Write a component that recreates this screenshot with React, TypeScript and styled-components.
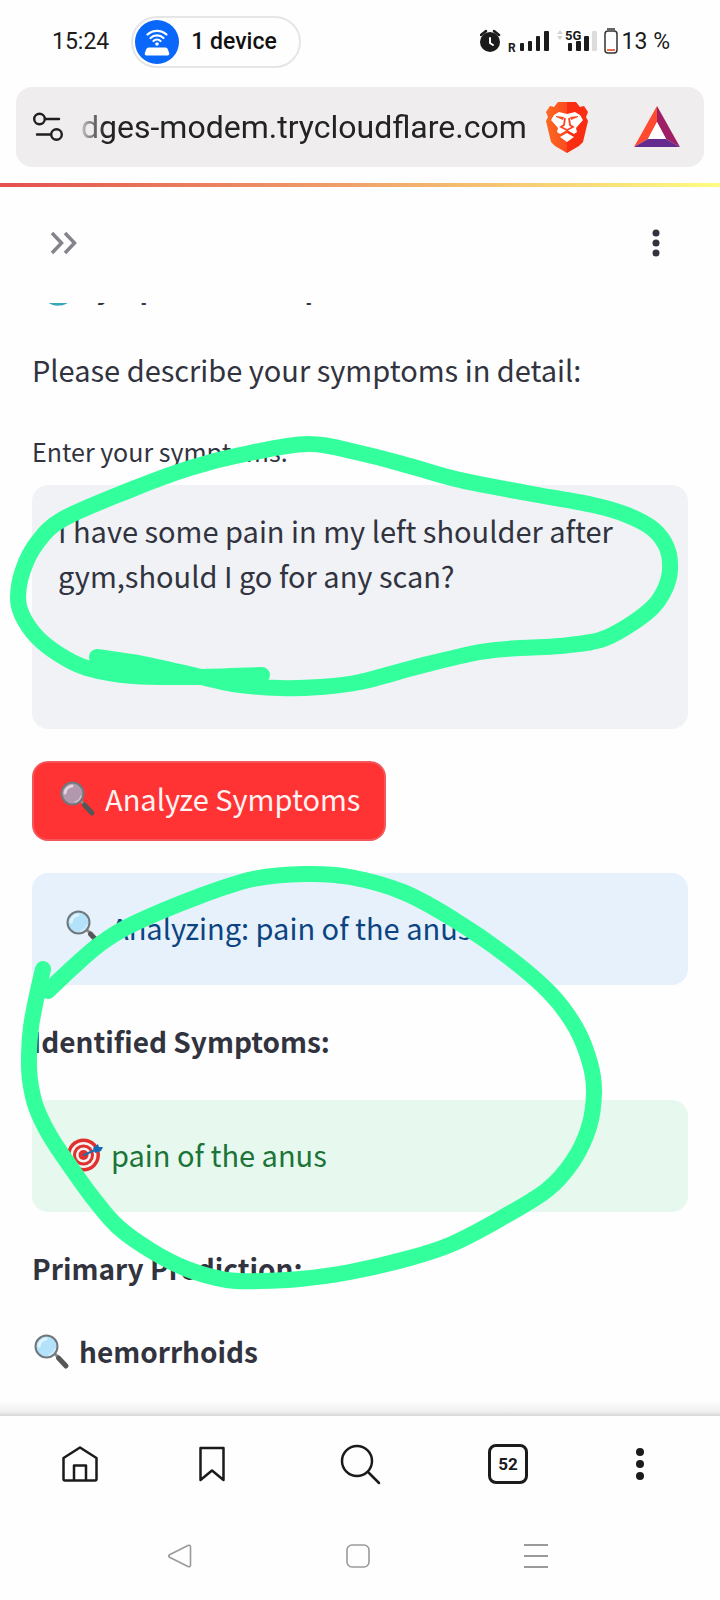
import React from "react";
import styled, { createGlobalStyle } from "styled-components";

const GlobalStyle = createGlobalStyle`
  * { box-sizing: border-box; }
  body { margin: 0; background: #fefefe; }
  button { font: inherit; border: 0; background: none; padding: 0; margin: 0; color: inherit; }
  p, h1, h2 { margin: 0; }
  svg { display: block; flex: none; }
`;

const uiFont = `Roboto, "Liberation Sans", sans-serif`;
const appFont = `"Noto Sans CJK SC", "Noto Sans", sans-serif`;

const Page = styled.div`
  position: relative;
  display: flex;
  flex-direction: column;
  min-height: 100vh;
  color: #31333f;
  font-family: ${appFont};
`;

const StatusBar = styled.header`
  display: flex;
  align-items: center;
  height: 84px;
  padding: 0 50px 0 52px;
  font: 400 23px/28px ${uiFont};
  color: #1b1b1b;
`;

const DevicePill = styled.button`
  && {
    display: flex;
    align-items: center;
    gap: 12px;
    height: 52px;
    margin-left: 22px;
    padding: 0 22px 0 2px;
    border: 2px solid #e6e6e6;
    border-radius: 26px;
    font-weight: 500;
    color: #111;
  }
`;

const StatusIcons = styled.div`
  display: flex;
  align-items: center;
  margin-left: auto;
  gap: 4px;
`;

const AddressBar = styled.div`
  display: flex;
  align-items: center;
  height: 80px;
  margin: 3px 16px 16px;
  padding: 0 24px 0 16px;
  border-radius: 16px;
  background: #efedee;
`;

const SiteButton = styled.button`
  display: flex;
`;

const Url = styled.input`
  flex: 1;
  min-width: 0;
  height: 48px;
  margin: 0 16px 0 17px;
  padding: 0;
  border: 0;
  background: none;
  color: #232323;
  font: 400 32px/48px ${uiFont};
  mask-image: linear-gradient(90deg, rgba(0, 0, 0, 0.2), #000 24px);
`;

const Shield = styled(SiteButton)`
  && { margin-right: 45px; }
`;

const Progress = styled.div`
  height: 4px;
  background: linear-gradient(90deg, #e4504f, #f0a36b 50%, #fdfd80);
`;

const Toolbar = styled.div`
  position: relative;
  z-index: 1;
  display: flex;
  align-items: center;
  justify-content: space-between;
  height: 116px;
  padding: 0 44px 4px;
  background: #fefefe;
`;

const ToolButton = styled.button`
  display: flex;
  align-items: center;
  justify-content: center;
  width: 40px;
  height: 48px;
`;

/* The scrolled column slides up under the toolbar. */
const Content = styled.main`
  flex: 1;
  display: flex;
  flex-direction: column;
  gap: 32px;
  margin-top: -40px;
  padding: 0 32px 32px;
  font-size: 29px;
  line-height: 45px;
`;

const Text = styled.p<{ $strong?: boolean }>`
  display: flex;
  gap: 7px;
  padding: ${(p) => (p.$strong ? "2px 0 4px" : "1px 0 5px")};
  font-size: ${(p) => (p.$strong ? 28 : 29)}px;
  font-weight: ${(p) => (p.$strong ? 600 : 400)};
`;

const Field = styled.div`
  display: flex;
  flex-direction: column;
`;

const Label = styled.label`
  height: 56px;
  padding-top: 1px;
  font-size: 25px;
  line-height: 42px;
`;

const SymptomBox = styled.textarea`
  display: block;
  width: 100%;
  height: 244px;
  padding: 23px 26px;
  border: 0;
  border-radius: 16px;
  resize: none;
  background: #f0f2f6;
  color: inherit;
  font: inherit;
`;

const AnalyzeButton = styled.button`
  && {
    display: flex;
    gap: 7px;
    align-self: flex-start;
    height: 80px;
    padding: 13px 24px 16px;
    border: 2px solid #f4565a;
    border-radius: 16px;
    background: #ff3334;
    color: #fff3f3;
  }
`;

const Alert = styled.div<{ $tone: "info" | "success" }>`
  display: flex;
  gap: 7px;
  padding: 32px 32px 35px;
  border-radius: 16px;
  background: ${(p) => (p.$tone === "info" ? "#e7f1fc" : "#e7f9ee")};
  color: ${(p) => (p.$tone === "info" ? "#0b4480" : "#1b7438")};
`;

const EmojiSvg = styled.svg`
  width: 40px;
  height: 40px;
  margin-top: 3px;
`;

const BrowserNav = styled.nav`
  position: relative;
  display: flex;
  align-items: center;
  justify-content: space-between;
  height: 96px;
  padding: 0 60px;
  background: #fefefe;
  &::before {
    content: "";
    position: absolute;
    left: 0;
    right: 0;
    bottom: 100%;
    height: 16px;
    background: linear-gradient(#fefefe, #f1f1f1 70%, #d6d6d6);
  }
`;

const NavButton = styled.button<{ $wide?: boolean }>`
  display: flex;
  align-items: center;
  justify-content: center;
  width: ${(p) => (p.$wide ? 72 : 40)}px;
  height: 48px;
`;

const TabCount = styled.span`
  display: flex;
  align-items: center;
  justify-content: center;
  width: 40px;
  height: 40px;
  border: 3px solid #1b1b1d;
  border-radius: 8px;
  color: #1b1b1d;
  font: 700 17px/20px ${uiFont};
`;

const SystemNav = styled.nav`
  display: flex;
  align-items: center;
  justify-content: space-between;
  height: 88px;
  padding: 0 172px 0 168px;
  background: #fefefe;
`;

const Ink = styled.svg`
  position: absolute;
  top: 0;
  left: 0;
  z-index: 2;
  width: 100%;
  height: auto;
  pointer-events: none;
`;

type Point = [number, number];

/* Catmull-Rom spline through the points, as cubic Béziers. */
function smooth(points: Point[]): string {
  let d = `M${points[0][0]} ${points[0][1]}`;
  for (let i = 0; i < points.length - 1; i++) {
    const a = points[i - 1] ?? points[i];
    const b = points[i];
    const c = points[i + 1];
    const e = points[i + 2] ?? c;
    d += `C${b[0] + (c[0] - a[0]) / 6} ${b[1] + (c[1] - a[1]) / 6} ${c[0] - (e[0] - b[0]) / 6} ${
      c[1] - (e[1] - b[1]) / 6
    } ${c[0]} ${c[1]}`;
  }
  return d;
}

const upperLoop: Point[] = [
  [262, 675], [193, 677], [133, 676], [87, 668], [60, 655], [37, 637], [22, 615], [18, 597],
  [23, 570], [37, 543], [63, 519], [130, 490], [190, 468], [240, 455], [308, 444], [360, 453],
  [410, 466], [460, 480], [527, 493], [593, 505], [627, 515], [653, 529], [667, 548], [670, 570],
  [665, 589], [653, 607], [628, 626], [600, 640], [560, 646], [520, 648], [480, 652], [420, 666],
  [360, 682], [320, 687], [280, 688], [233, 684], [197, 676], [143, 664], [97, 657],
];

const lowerLoop: Point[] = [
  [43, 969], [37, 995], [31, 1027], [29, 1055], [30, 1080], [36, 1107], [50, 1136], [72, 1169],
  [93, 1198], [117, 1226], [150, 1250], [187, 1269], [227, 1280], [260, 1281], [300, 1279],
  [350, 1272], [410, 1258], [452, 1244], [500, 1219], [547, 1190], [573, 1161], [589, 1127],
  [594, 1092], [590, 1063], [576, 1028], [550, 993], [507, 956], [453, 919], [403, 892],
  [350, 877], [305, 874], [253, 879], [200, 896], [133, 924], [100, 944], [70, 970], [48, 991],
];

const Magnifier = ({ glass = "#b5e2fb" }: { glass?: string }) => (
  <EmojiSvg viewBox="0 0 40 40" aria-hidden="true">
    <path d="M23 22l4 4" stroke="#8b8b8b" strokeWidth="3" />
    <path d="M26.500 26l7.500 8" stroke="#565656" strokeWidth="5" strokeLinecap="round" />
    <circle cx="14.500" cy="14.500" r="11" fill={glass} stroke="#71787c" strokeWidth="2" />
    <path d="M7 14a8 8 0 0 1 7-7" fill="none" stroke="#fff" strokeOpacity="0.600" strokeWidth="3" strokeLinecap="round" />
    <path d="M23 17a8 8 0 0 1-6 6" fill="none" stroke="#fff" strokeOpacity="0.400" strokeWidth="1.500" strokeLinecap="round" />
  </EmojiSvg>
);

const Target = () => (
  <EmojiSvg viewBox="0 0 40 40" aria-hidden="true">
    <circle cx="19.500" cy="20" r="16.500" fill="#e0312e" />
    <circle cx="19.500" cy="20" r="13" fill="#f7f3f3" />
    <circle cx="19.500" cy="20" r="10.500" fill="#e0312e" />
    <circle cx="19.500" cy="20" r="7.500" fill="#f7f3f3" />
    <circle cx="19.500" cy="20" r="5" fill="#e0312e" />
    <path d="M20 20l11-5" stroke="#1f6ea8" strokeWidth="2" strokeLinecap="round" />
    <path d="M29 13l5-4 1 3 4 0-2 4-6 2z" fill="#1769b5" />
  </EmojiSvg>
);

const Stethoscope = () => (
  <EmojiSvg viewBox="0 0 40 40" aria-hidden="true">
    <path d="M8 4H5v8a8 8 0 0 0 16 0V4h-3M13 20v5c0 15 27 15 27-1V18" fill="none" stroke="#35a9b8" strokeWidth="3" />
    <circle cx="36" cy="15" r="3" fill="#8aa0aa" />
  </EmojiSvg>
);

const Dots = ({ r, step, color }: { r: number; step: number; color: string }) => (
  <svg width="12" height="36" viewBox="0 0 12 36" fill={color} aria-hidden="true">
    <circle cx="6" cy={18 - step} r={r} />
    <circle cx="6" cy="18" r={r} />
    <circle cx="6" cy={18 + step} r={r} />
  </svg>
);

export default function App() {
  return (
    <Page>
      <GlobalStyle />
      <StatusBar>
        <span>15:24</span>
        <DevicePill>
          <svg width="44" height="44" viewBox="0 0 44 44" aria-hidden="true">
            <circle cx="22" cy="22" r="22" fill="#0968fb" />
            <g fill="none" stroke="#fff" strokeWidth="2.200" strokeLinecap="round">
              <path d="M12.500 14.500a14 14 0 0 1 19 0M15.500 18a9.500 9.500 0 0 1 13 0M18.500 21a5 5 0 0 1 7 0" />
            </g>
            <circle cx="22" cy="24" r="1.800" fill="#fff" />
            <path d="M13.500 27.500h17q1.500 0 2.200 1.500l1.500 4q.5 2.500-2 2.500H11.800q-2.500 0-2-2.500l1.500-4q.7-1.500 2.200-1.500z" fill="#fff" />
          </svg>
          1 device
        </DevicePill>
        <StatusIcons>
          <svg width="138" height="28" viewBox="480 28 138 28" aria-hidden="true">
            <circle cx="490" cy="42" r="10" fill="#1b1b1b" />
            <path d="M481 35l5-4M499 35l-5-4" stroke="#1b1b1b" strokeWidth="2.500" strokeLinecap="round" />
            <path d="M490 38v5l3 2" fill="none" stroke="#fff" strokeWidth="2" strokeLinecap="round" />
            <text x="508" y="52" fontFamily="Roboto" fontSize="12" fontWeight="700" fill="#1b1b1b">R</text>
            <g fill="#1b1b1b">
              <rect x="520" y="43" width="4" height="8" rx="1" />
              <rect x="528" y="41" width="4" height="10" rx="1" />
              <rect x="536" y="36" width="4" height="15" rx="1" />
              <rect x="544" y="31" width="5" height="20" rx="1" />
              <rect x="568" y="43" width="4" height="8" rx="1" />
              <rect x="576" y="41" width="5" height="10" rx="1" />
              <rect x="584" y="36" width="5" height="15" rx="1" />
            </g>
            <rect x="592" y="31" width="5" height="20" rx="1" fill="#dcdcdc" />
            <path d="M557 34l3-4 3 4zM557 36l3 4 3-4z" fill="#d4d4d4" />
            <text x="565" y="40" fontFamily="Roboto" fontSize="13" fontWeight="700" fill="#1b1b1b">5G</text>
            <rect x="605" y="31" width="12" height="22" rx="3" fill="none" stroke="#333" strokeWidth="1.500" />
            <path d="M607 29h8" stroke="#333" strokeWidth="1.500" />
            <rect x="607" y="49" width="8" height="2" fill="#ee6e4c" />
          </svg>
          <span>13 %</span>
        </StatusIcons>
      </StatusBar>

      <AddressBar>
        <SiteButton aria-label="Site settings">
          <svg width="32" height="30" viewBox="0 0 32 30" fill="none" stroke="#1f1f1f" strokeWidth="2.400" aria-hidden="true">
            <circle cx="7.500" cy="7" r="5.300" />
            <path d="M13 7h14M5 22.500h13" strokeLinecap="round" />
            <circle cx="24.500" cy="22.500" r="5.300" />
          </svg>
        </SiteButton>
        <Url aria-label="Address" defaultValue="dges-modem.trycloudflare.com" />
        <Shield aria-label="Brave Shields">
          <svg width="44" height="52" viewBox="0 0 44 52" aria-hidden="true">
            <defs>
              <linearGradient id="mane" x2="1">
                <stop offset="0" stopColor="#fb6a20" />
                <stop offset="0.500" stopColor="#fb4a20" />
                <stop offset="0.500" stopColor="#fa2c12" />
              </linearGradient>
            </defs>
            <path d="M13 1h18l4 5 4-1 4 6-2 5 2 4-5 21-4 4-12 7-12-7-4-4-5-21 2-4-2-5 4-6 4 1z" fill="url(#mane)" />
            <path d="M9 14l5-3 8 2 8-2 5 3 3 5-7 8 1 4-3 2-7-4-7 4-3-2 1-4-7-8z" fill="#fff" />
            <path d="M11 15l8 1-1 3-7-3M33 15l-8 1 1 3 7-3" fill="#fa4d22" />
            <path d="M20 17l-1 7-3 2 6 3 6-3-3-2-1-7M22 29v4" fill="none" stroke="#fa4422" strokeWidth="1.800" />
            <path d="M15 36l7-4 7 4-7 5z" fill="#fff" />
          </svg>
        </Shield>
        <SiteButton aria-label="Brave Rewards">
          <svg width="46" height="42" viewBox="0 0 46 42" aria-hidden="true">
            <path d="M23 0v16l-9 17-14 8z" fill="#ff4a30" />
            <path d="M23 0l23 41-14-8-9-17z" fill="#9e1f63" />
            <path d="M0 41l14-8h18l14 8z" fill="#642a8d" />
            <path d="M23 16l9 17H14z" fill="#fff" />
          </svg>
        </SiteButton>
      </AddressBar>
      <Progress />

      <Toolbar>
        <ToolButton aria-label="Open sidebar">
          <svg width="32" height="28" viewBox="0 0 32 28" fill="none" stroke="#83858b" strokeWidth="3.500" aria-hidden="true">
            <path d="M4 4l9.500 10L4 24M17 4l9.500 10L17 24" />
          </svg>
        </ToolButton>
        <ToolButton aria-label="Menu">
          <Dots r={3.5} step={10} color="#31333f" />
        </ToolButton>
      </Toolbar>

      <Content>
        <Text as="h1" $strong><Stethoscope />Symptom Description</Text>
        <Text>Please describe your symptoms in detail:</Text>
        <Field>
          <Label htmlFor="symptoms">Enter your symptoms:</Label>
          <SymptomBox
            id="symptoms"
            defaultValue="I have some pain in my left shoulder after gym,should I go for any scan?"
          />
        </Field>
        <AnalyzeButton><Magnifier glass="#b397ad" />Analyze Symptoms</AnalyzeButton>
        <Alert $tone="info"><Magnifier />Analyzing: pain of the anus</Alert>
        <Text as="h2" $strong>Identified Symptoms:</Text>
        <Alert $tone="success"><Target />pain of the anus</Alert>
        <Text as="h2" $strong>Primary Prediction:</Text>
        <Text $strong><Magnifier />hemorrhoids</Text>
      </Content>

      <BrowserNav aria-label="Browser">
        <NavButton aria-label="Home">
          <svg width="40" height="40" viewBox="0 0 40 40" fill="none" stroke="#1b1b1d" strokeWidth="2.500" strokeLinejoin="round" aria-hidden="true">
            <path d="M3.500 14L20 3.500 36.500 14v21q0 1.500-1.500 1.500H5q-1.500 0-1.500-1.500zM14 36V21.500h12V36" />
          </svg>
        </NavButton>
        <NavButton aria-label="Bookmarks">
          <svg width="40" height="40" viewBox="0 0 40 40" fill="none" stroke="#1b1b1d" strokeWidth="2.500" strokeLinejoin="round" aria-hidden="true">
            <path d="M8.500 4h23v32L20 26.500 8.500 36z" />
          </svg>
        </NavButton>
        <NavButton $wide aria-label="Search">
          <svg width="44" height="44" viewBox="0 0 44 44" fill="none" stroke="#1b1b1d" strokeWidth="2.500" strokeLinecap="round" aria-hidden="true">
            <circle cx="19" cy="19" r="15" />
            <path d="M30 30l11 11" />
          </svg>
        </NavButton>
        <NavButton aria-label="Tabs"><TabCount>52</TabCount></NavButton>
        <NavButton aria-label="More"><Dots r={4} step={12} color="#1b1b1d" /></NavButton>
      </BrowserNav>
      <SystemNav aria-label="System">
        <SiteButton aria-label="Back">
          <svg width="24" height="24" viewBox="0 0 24 24" fill="none" stroke="#9a9a9a" strokeWidth="1.600" strokeLinejoin="round" aria-hidden="true">
            <path d="M2 10.500L20 1.500q2.500-.8 2.500 1.500v18q0 2.300-2.500 1.500L2 13.500q-2.500-1.500 0-3z" />
          </svg>
        </SiteButton>
        <SiteButton aria-label="Home screen">
          <svg width="24" height="24" viewBox="0 0 24 24" fill="none" stroke="#9a9a9a" strokeWidth="1.600" aria-hidden="true">
            <rect x="1" y="1" width="22" height="22" rx="5" />
          </svg>
        </SiteButton>
        <SiteButton aria-label="Recent apps">
          <svg width="24" height="24" viewBox="0 0 24 24" stroke="#9a9a9a" strokeWidth="2" aria-hidden="true">
            <path d="M0 1h24M0 12h24M0 23h24" />
          </svg>
        </SiteButton>
      </SystemNav>

      <Ink viewBox="0 0 720 1600" fill="none" stroke="#33ff9c" strokeWidth="16" strokeLinecap="round" strokeLinejoin="round" aria-hidden="true">
        <path d={smooth(upperLoop)} />
        <path d={smooth(lowerLoop)} />
      </Ink>
    </Page>
  );
}
